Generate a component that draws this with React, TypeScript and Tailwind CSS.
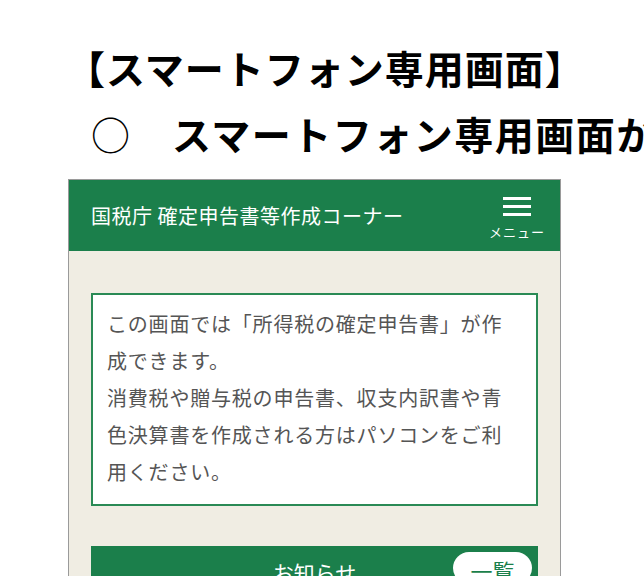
import React from 'react';

const notice = [
  'この画面では「所得税の確定申告書」が作',
  '成できます。',
  '消費税や贈与税の申告書、収支内訳書や青',
  '色決算書を作成される方はパソコンをご利',
  '用ください。',
];

const App: React.FC = () => {
  return (
    <div className="w-[644px] h-[576px] overflow-hidden bg-white font-['Noto_Sans_CJK_JP',sans-serif]">
      <div className="pt-[45px] pl-[66px] text-[39px] font-bold leading-[44px] tracking-[1px] text-black whitespace-nowrap">
        【スマートフォン専用画面】
      </div>
      <div className="mt-[22px] pl-[91px] text-[39px] leading-[44px] tracking-[1.5px] text-black whitespace-nowrap">
        <span className="font-normal">○</span>
        <span className="font-bold">　スマートフォン専用画面から申告</span>
      </div>

      <div className="mt-[24px] ml-[68px] w-[493px] border border-[#9a9a9a] border-b-0">
        <div className="h-[71px] bg-[#1b7f4b] flex items-center justify-between pl-[22px] pr-[15px]">
          <span className="text-white text-[20px] tracking-[0.5px]">国税庁 確定申告書等作成コーナー</span>
          <button className="flex flex-col items-center pt-[6px]">
            <span className="flex flex-col gap-[5px] w-[28px]">
              <span className="h-[3px] bg-white"></span>
              <span className="h-[3px] bg-white"></span>
              <span className="h-[3px] bg-white"></span>
            </span>
            <span className="text-white text-[13px] leading-[16px] mt-[8px] tracking-[1px]">メニュー</span>
          </button>
        </div>

        <div className="bg-[#f0ede3] px-[22px] pt-[42px] h-[400px]">
          <div className="border-2 border-[#2a8a55] bg-white px-[14px] pt-[10px] pb-[14px] text-[#555] text-[20px] leading-[37px] tracking-[0.8px]">
            {notice.map((line) => (
              <div key={line} className="whitespace-nowrap">{line}</div>
            ))}
          </div>

          <div className="mt-[40px] h-[44px] bg-[#1b7f4b] relative flex items-start justify-center pt-[12px]">
            <span className="text-white text-[21px] leading-[28px]">お知らせ</span>
            <span className="absolute right-[6px] top-[6px] w-[79px] h-[32px] rounded-full bg-white flex items-center justify-center text-[#1b7f4b] text-[22px] leading-[28px] pt-[4px]">
              一覧
            </span>
          </div>
        </div>
      </div>
    </div>
  );
};

export default App;
